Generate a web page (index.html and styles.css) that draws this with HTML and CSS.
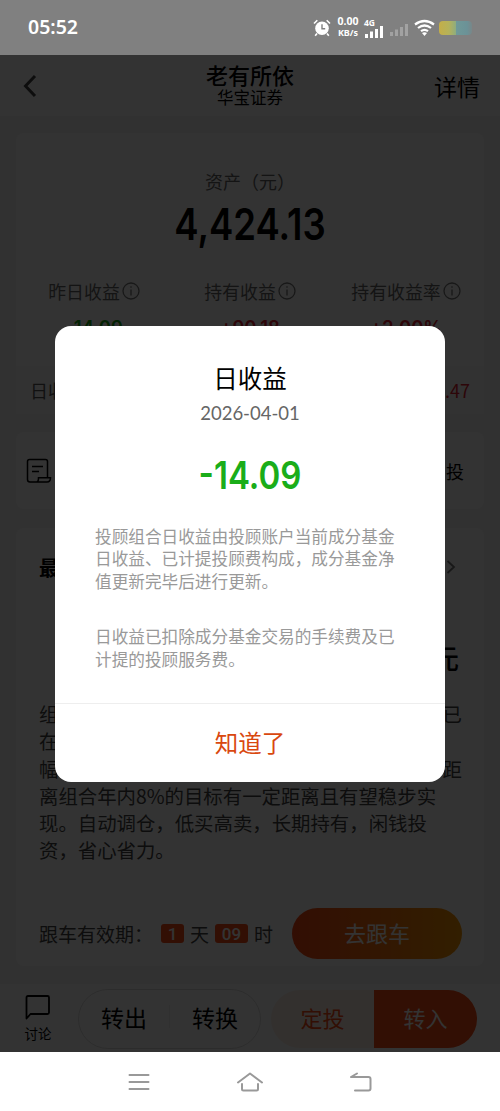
FILE: index.html
```html
<!DOCTYPE html>
<html lang="zh-CN">
<head>
    <meta charset="UTF-8">
    <meta name="viewport" content="width=device-width, initial-scale=1.0">
    <title>老有所依</title>
    <link rel="stylesheet" href="styles.css">
</head>
<body>
    <div class="status-bar">
        <span class="time">05:52</span>
        <div class="status-icons">
            <svg width="18" height="18" viewBox="0 0 18 18">
                <circle cx="9" cy="9.3" r="6.8" fill="#fff"/>
                <path d="M1 4.5L4.3 1.2M17 4.5L13.7 1.2M4 14.5L2.2 16.8M14 14.5L15.8 16.8" stroke="#fff" stroke-width="1.6" fill="none"/>
                <path d="M9 5.2V9.8H12.2" stroke="#808080" stroke-width="1.4" fill="none"/>
            </svg>
            <div class="speed"><span>0.00</span><span>KB/s</span></div>
            <div class="signal">
                <span class="net">4G</span>
                <svg width="20" height="13" viewBox="0 0 20 13">
                    <path d="M2.5 13V9M7.5 13V6.5M12.5 13V4M17.5 13V1" stroke="#fff" stroke-width="3"/>
                </svg>
            </div>
            <svg class="signal-off" width="19" height="18" viewBox="0 0 19 18">
                <path d="M1.5 17V13M6.5 17V10.5M11.5 17V8M16.5 17V5" stroke="#a2a2a2" stroke-width="3"/>
            </svg>
            <svg class="wifi" width="21" height="18" viewBox="0 0 21 18">
                <path d="M1 5.5Q10.5 -1.5 20 5.5M4 9Q10.5 4 17 9M7 12.2Q10.5 9.6 14 12.2" stroke="#fff" stroke-width="2.2" fill="none"/>
                <path d="M8 14Q10.5 12.6 13 14L10.5 17Z" fill="#fff"/>
            </svg>
            <span class="battery"></span>
        </div>
    </div>

    <div class="page">
        <div class="header">
            <svg class="back" width="14" height="24" viewBox="0 0 14 24"><path d="M12 2L2.5 12L12 22" stroke="#444" stroke-width="3" fill="none"/></svg>
            <div class="title">
                <h1>老有所依</h1>
                <p>华宝证券</p>
            </div>
            <span class="detail">详情</span>
        </div>

        <div class="card asset">
            <p class="asset-label">资产（元）</p>
            <p class="asset-num">4,424.13</p>
            <div class="profits">
                <div class="profit">
                    <p>昨日收益<svg class="info" viewBox="0 0 18 18"><circle cx="9" cy="9" r="8"/><path d="M9 4.3V5.8M9 7.5V13.5"/></svg></p>
                    <b class="green">-14.09</b>
                </div>
                <div class="profit">
                    <p>持有收益<svg class="info" viewBox="0 0 18 18"><circle cx="9" cy="9" r="8"/><path d="M9 4.3V5.8M9 7.5V13.5"/></svg></p>
                    <b class="red">+90.18</b>
                </div>
                <div class="profit">
                    <p>持有收益率<svg class="info" viewBox="0 0 18 18"><circle cx="9" cy="9" r="8"/><path d="M9 4.3V5.8M9 7.5V13.5"/></svg></p>
                    <b class="red">+2.00%</b>
                </div>
            </div>
            <div class="day-row"><span>日收益</span><span class="red">.47</span></div>
        </div>

        <div class="card plan">
            <svg width="26" height="26" viewBox="0 0 26 26">
                <path d="M10.5 24H4Q1.5 24 1.5 21.5V3.5Q1.5 1.5 3.5 1.5H19.5Q21.5 1.5 21.5 3.5V19.5M6 8.5H17M6 13.5H13M10.5 24Q12.5 24 12.5 19.8H24.5Q24.5 24 21 24Z" stroke="#000" stroke-width="1.5" fill="none"/>
            </svg>
            <span>投</span>
        </div>

        <div class="card story">
            <div class="story-head">
                <b>最新</b>
                <svg width="10" height="16" viewBox="0 0 10 16"><path d="M1.5 2L8 8L1.5 14" stroke="#777" stroke-width="1.8" fill="none"/></svg>
            </div>
            <p class="amount">元</p>
            <div class="story-text">
                <p class="split"><span>组</span><span>已</span></p>
                <p>在</p>
                <p class="split"><span>幅</span><span>距</span></p>
                <p>离组合年内8%的目标有一定距离且有望稳步实</p>
                <p>现。自动调仓，低买高卖，长期持有，闲钱投</p>
                <p>资，省心省力。</p>
            </div>
            <div class="follow">
                <span class="follow-label">跟车有效期：</span>
                <span class="tag">1</span>
                <span class="unit">天</span>
                <span class="tag wide">09</span>
                <span class="unit">时</span>
                <button class="follow-btn">去跟车</button>
            </div>
        </div>

        <div class="toolbar">
            <div class="discuss">
                <svg width="26" height="26" viewBox="0 0 26 26"><path d="M1.5 24.5V3.5Q1.5 2 3 2H22.5Q24 2 24 3.5V18.5Q24 20 22.5 20H5.5Z" stroke="#000" stroke-width="1.8" fill="none" stroke-linejoin="round"/></svg>
                <span>讨论</span>
            </div>
            <div class="outline-btns"><span>转出</span><i></i><span>转换</span></div>
            <div class="solid-btns"><span class="invest">定投</span><span class="in">转入</span></div>
        </div>

        <div class="mask"></div>

        <div class="modal">
            <h2>日收益</h2>
            <p class="date">2026-04-01</p>
            <p class="modal-num">-14.09</p>
            <div class="desc">
                <p>投顾组合日收益由投顾账户当前成分基金<br>日收益、已计提投顾费构成，成分基金净<br>值更新完毕后进行更新。</p>
                <p>日收益已扣除成分基金交易的手续费及已<br>计提的投顾服务费。</p>
            </div>
            <button class="ok">知道了</button>
        </div>
    </div>

    <div class="nav-bar">
        <svg width="22" height="20" viewBox="0 0 22 20"><path d="M1.5 3H20.5M1.5 10H20.5M1.5 17H20.5"/></svg>
        <svg width="28" height="22" viewBox="0 0 28 22"><path d="M2 11.5L14 2.5L26 11.5M6 13V18Q6 19.5 7.5 19.5H20.5Q22 19.5 22 18V13"/></svg>
        <svg width="24" height="22" viewBox="0 0 24 22"><path d="M8 2.5L2 6H19.5Q21.5 6 21.5 8V17.5Q21.5 19.5 19.5 19.5H6"/></svg>
    </div>
</body>
</html>
```

FILE: styles.css
```css
* {
    box-sizing: border-box;
}

body {
    margin: 0;
    width: 500px;
    height: 1111px;
    overflow: hidden;
    font-family: "Noto Sans CJK SC", sans-serif;
    color: #000;
}

h1, h2, p {
    margin: 0;
    font-weight: normal;
}

button {
    border: 0;
    padding: 0;
    font-family: inherit;
}

svg {
    flex: none;
}

/* status bar */
.status-bar {
    height: 55px;
    padding: 0 28px;
    display: flex;
    align-items: center;
    justify-content: space-between;
    background: #808080;
    color: #fff;
}

.time {
    margin-top: -2px;
    font-family: "Noto Sans", sans-serif;
    font-size: 19.5px;
    font-weight: 600;
    line-height: 28px;
}

.status-icons {
    display: flex;
    align-items: center;
}

.speed {
    width: 24px;
    margin-left: 5px;
    margin-right: 1px;
    margin-top: -1px;
    display: flex;
    flex-direction: column;
    align-items: center;
    font-family: "Noto Sans", sans-serif;
    font-size: 9px;
    font-weight: 700;
    line-height: 11px;
}

.speed span:first-child {
    font-size: 10.5px;
}

.signal {
    width: 21px;
    height: 22px;
    margin-left: 3px;
    display: flex;
    flex-direction: column;
}

.signal svg {
    margin-top: -4px;
}

.net {
    font: 700 8.5px/12px "Noto Sans", sans-serif;
}

.signal-off {
    margin-left: 5px;
}

.wifi {
    margin-left: 5px;
}

.battery {
    width: 33px;
    height: 14px;
    margin-left: 4px;
    border-radius: 4px;
    background: linear-gradient(90deg, #c4ae48 0, #b5b25a 30%, #91ad7c 50%, #6f9998 52%, #6b9297 85%, #788789 100%);
}

/* page */
.page {
    position: relative;
    height: 997px;
    background: #f5f5f5;
}

.mask {
    position: absolute;
    inset: 0;
    background: rgba(0, 0, 0, 0.8);
}

.header {
    height: 61px;
    padding: 0 20px 0 23px;
    display: flex;
    align-items: center;
    justify-content: space-between;
    background: #fff;
}

.title {
    margin-left: 29px;
    text-align: center;
}

.title h1 {
    font-size: 22px;
    font-weight: 500;
    line-height: 24px;
}

.title p {
    font-size: 16.5px;
    line-height: 23px;
}

.detail {
    font-size: 23px;
    line-height: 28px;
}

.card {
    margin: 0 16px;
    background: #fff;
    border-radius: 8px;
}

.asset {
    height: 281px;
    margin-top: 17px;
    padding-top: 35px;
    text-align: center;
}

.asset-label {
    color: #666;
    font-size: 18px;
    line-height: 26px;
}

.asset-num {
    height: 60px;
    font: 600 44px/60px Inter, sans-serif;
    transform: scaleX(0.83);
}

.profits {
    height: 112px;
    padding-top: 24px;
    display: flex;
}

.profit {
    flex: 1;
}

.profit p {
    display: flex;
    align-items: center;
    justify-content: center;
    color: #666;
    font-size: 17.9px;
    line-height: 26px;
}

.info {
    width: 18px;
    height: 18px;
    margin-left: 2px;
    fill: none;
    stroke: #777;
    stroke-width: 1.3;
}

.profit b {
    display: block;
    margin-top: 12px;
    font: 600 19.5px/24px Inter, sans-serif;
    transform: scaleX(0.95);
}

.green {
    color: #12a812;
}

.red {
    color: #e02030;
}

.day-row {
    height: 48px;
    padding: 0 14px;
    display: flex;
    align-items: center;
    justify-content: space-between;
    background: #fafafa;
    color: #555;
    font-size: 18px;
}

.plan {
    height: 77px;
    margin-top: 18px;
    padding: 0 20px 0 10px;
    display: flex;
    align-items: center;
    justify-content: space-between;
    font-size: 18px;
}

.story {
    height: 438px;
    margin-top: 19px;
    padding: 22px 22px 0 23px;
}

.story-head {
    height: 34px;
    padding-right: 6px;
    display: flex;
    align-items: center;
    justify-content: space-between;
    font-size: 20px;
}

.amount {
    height: 116px;
    padding-right: 3px;
    font-size: 27px;
    font-weight: 500;
    line-height: 148px;
    text-align: right;
}

.story-text {
    color: #444;
    font-size: 19.4px;
    line-height: 27.3px;
}

.split {
    display: flex;
    justify-content: space-between;
}

.follow {
    margin-top: 44px;
    height: 51px;
    display: flex;
    align-items: center;
    color: #444;
    font-size: 19px;
}

.follow-label {
    width: 122px;
    white-space: nowrap;
}

.tag {
    width: 23px;
    height: 19px;
    border-radius: 3px;
    background: #fa4b14;
    color: #fff;
    font: 500 17px/20px Roboto, sans-serif;
    text-align: center;
}

.tag.wide {
    width: 33px;
}

.unit {
    width: 31px;
    text-align: center;
}

.follow-btn {
    width: 170px;
    height: 51px;
    margin-left: auto;
    padding-bottom: 2px;
    border-radius: 26px;
    background: linear-gradient(90deg, #fa4614, #fa780a 60%, #fa9600);
    color: #fff;
    font-size: 22px;
}

/* toolbar */
.toolbar {
    height: 69px;
    margin-top: 18px;
    padding: 0 23px;
    display: flex;
    align-items: center;
    background: #fff;
}

.discuss {
    width: 30px;
    margin-right: 25px;
    display: flex;
    flex-direction: column;
    align-items: center;
    font-size: 13.5px;
    line-height: 20px;
    white-space: nowrap;
}

.discuss span {
    margin-top: 3px;
}

.outline-btns {
    width: 183px;
    height: 60px;
    padding-bottom: 4px;
    border: 1px solid #ddd;
    border-radius: 30px;
    display: flex;
    align-items: center;
    justify-content: center;
    gap: 22px;
    font-size: 23px;
}

.outline-btns i {
    width: 1px;
    height: 23px;
    background: #eee;
}

.solid-btns {
    width: 206px;
    height: 58px;
    margin-left: 10px;
    border-radius: 29px;
    overflow: hidden;
    display: flex;
    font-size: 22px;
    line-height: 54px;
    text-align: center;
}

.invest {
    flex: 1;
    background: #fff0e6;
    color: #fa4b14;
}

.in {
    width: 103px;
    background: #fa4b14;
    color: #fff;
}

/* modal */
.modal {
    position: absolute;
    top: 271px;
    left: 55px;
    width: 390px;
    height: 456px;
    padding-top: 34px;
    display: flex;
    flex-direction: column;
    background: #fff;
    border-radius: 16px;
    text-align: center;
}

.modal h2 {
    font-size: 24.5px;
    line-height: 36px;
}

.date {
    margin-top: 3px;
    color: #666;
    font: 18.5px/28px Lato, sans-serif;
}

.modal-num {
    height: 40px;
    margin-top: 28px;
    color: #1aad19;
    font: 600 38px/40px Inter, sans-serif;
    transform: scaleX(0.87);
}

.desc {
    padding: 30px 0 0 40px;
    color: #999;
    font-size: 16.65px;
    line-height: 22.4px;
    text-align: left;
}

.desc p + p {
    margin-top: 33px;
}

.ok {
    height: 79px;
    margin-top: auto;
    padding-bottom: 3px;
    border-top: 1px solid #eee;
    border-radius: 0 0 16px 16px;
    background: none;
    color: #d9480f;
    font-size: 23.5px;
}

/* system navigation */
.nav-bar {
    height: 59px;
    padding: 0 127px 0 128px;
    display: flex;
    align-items: center;
    justify-content: space-between;
    background: #fff;
}

.nav-bar svg {
    fill: none;
    stroke: #999;
    stroke-width: 2;
    stroke-linecap: round;
    stroke-linejoin: round;
}
```
